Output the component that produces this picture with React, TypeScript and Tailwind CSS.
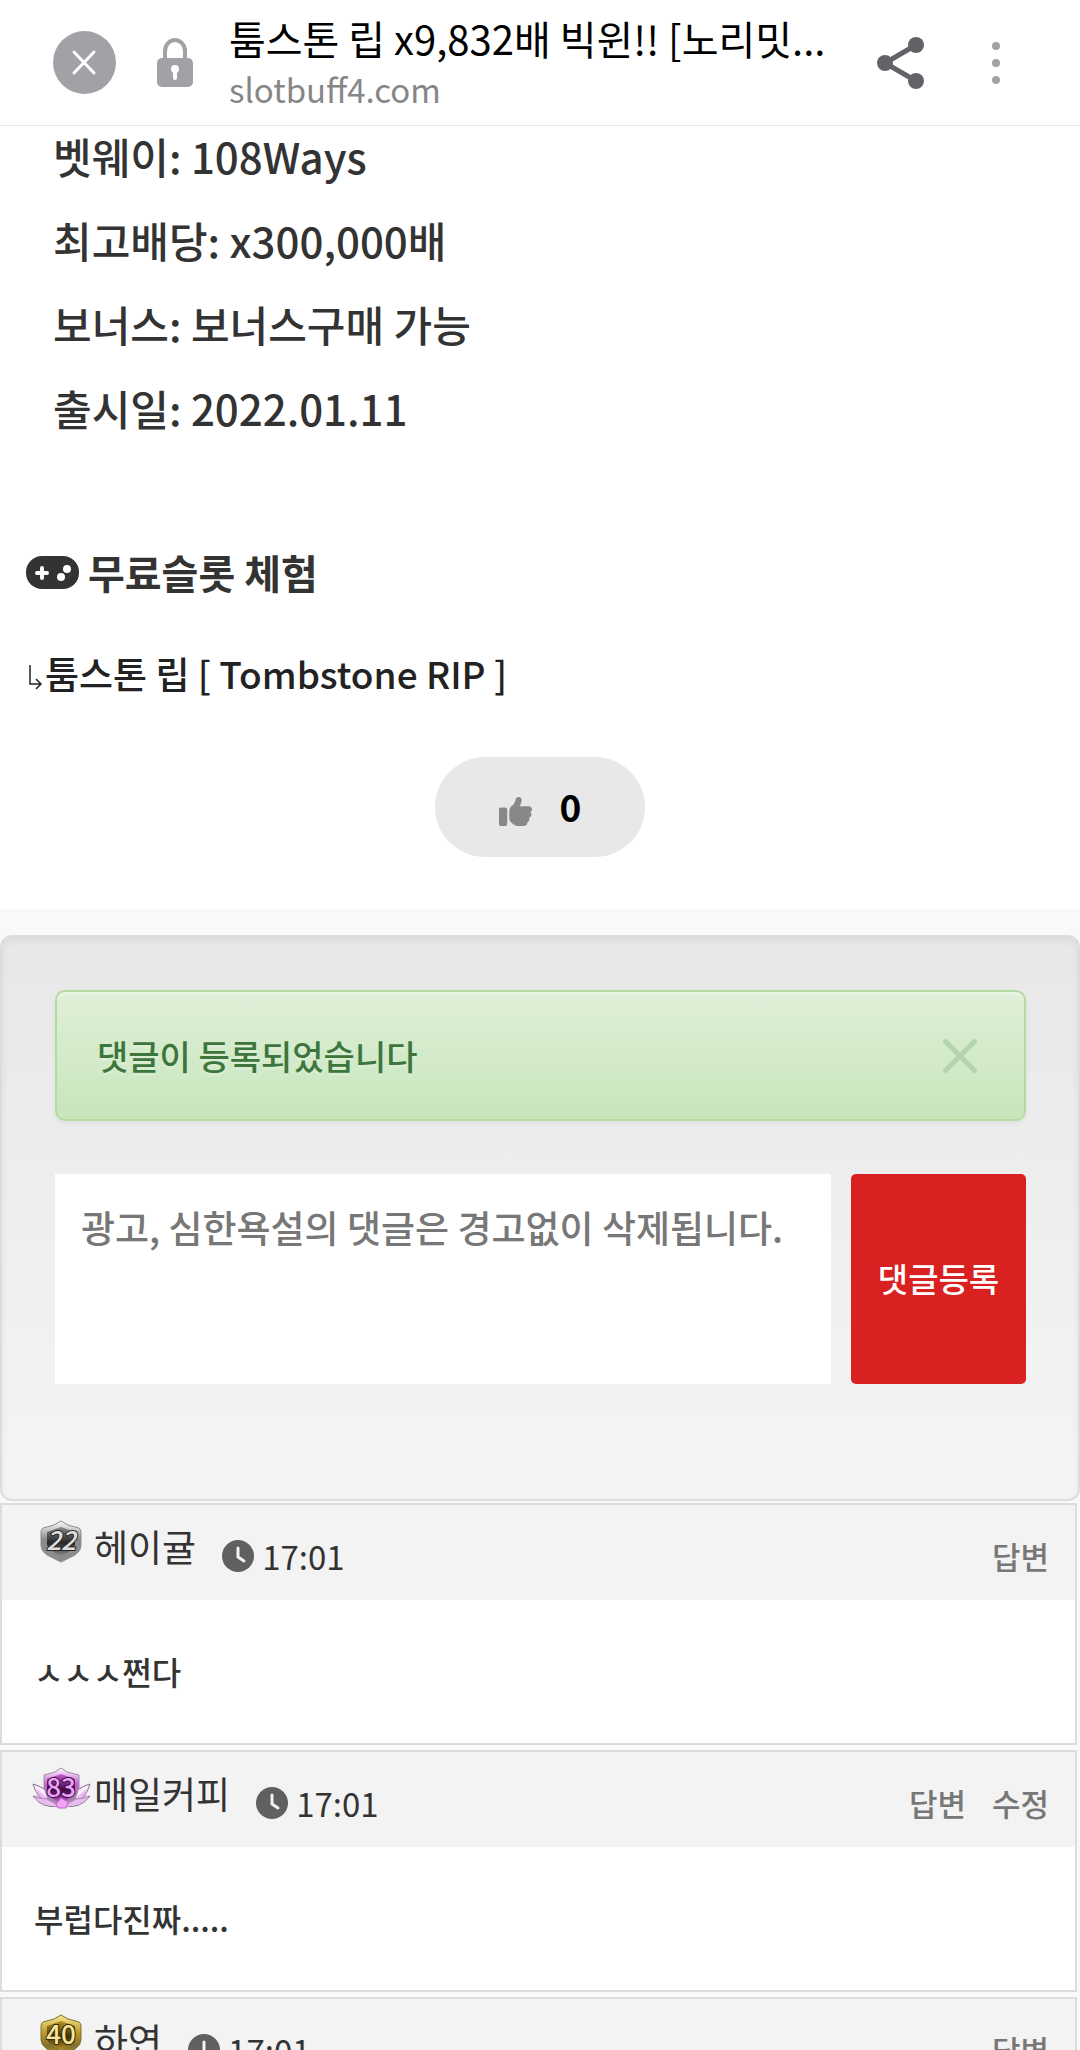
import { useState } from "react";
import { FaThumbsUp } from "react-icons/fa6";

type Tier = "silver" | "violet" | "gold";

type Comment = {
  id: number;
  author: string;
  level: number;
  tier: Tier;
  time: string;
  text: string;
  actions: string[];
};

const specs = [
  ["벳웨이", "108Ways"],
  ["최고배당", "x300,000배"],
  ["보너스", "보너스구매 가능"],
  ["출시일", "2022.01.11"]
];

const comments: Comment[] = [
  { id: 1, author: "헤이귤", level: 22, tier: "silver", time: "17:01", text: "ㅅㅅㅅ쩐다", actions: ["답변"] },
  { id: 2, author: "매일커피", level: 83, tier: "violet", time: "17:01", text: "부럽다진짜.....", actions: ["답변", "수정"] },
  { id: 3, author: "하연", level: 40, tier: "gold", time: "17:01", text: "축하드려요", actions: ["답변"] }
];

const tierColors: Record<Tier, { light: string; mid: string; dark: string; edge: string; digit: string }> = {
  silver: { light: "#ffffff", mid: "#8a8a8a", dark: "#262626", edge: "#8d8d8d", digit: "#dedede" },
  violet: { light: "#ffffff", mid: "#c45fd0", dark: "#3c0a45", edge: "#a08ba3", digit: "#eda2f5" },
  gold: { light: "#fbe98a", mid: "#b8962a", dark: "#3a2c05", edge: "#80702f", digit: "#f7e49a" }
};

function LevelBadge({ level, tier }: { level: number; tier: Tier }) {
  const c = tierColors[tier];
  return (
    <svg viewBox="0 0 60 44" className="h-11 w-15 shrink-0" role="img" aria-label={`레벨 ${level}`}>
      <defs>
        <linearGradient id={`rim-${tier}`} x1="0" y1="0" x2="0" y2="1">
          <stop offset="0" stopColor={c.light} />
          <stop offset="0.45" stopColor={c.mid} />
          <stop offset="0.75" stopColor={c.edge} />
          <stop offset="1" stopColor={c.mid} />
        </linearGradient>
        <linearGradient id={`core-${tier}`} x1="0" y1="0" x2="0" y2="1">
          <stop offset="0" stopColor={c.mid} />
          <stop offset="0.55" stopColor={c.dark} />
          <stop offset="1" stopColor={c.mid} />
        </linearGradient>
      </defs>
      {tier === "violet" ? (
        <g fill="#fbeefd" stroke="#8b7290" strokeWidth="1" strokeLinejoin="round">
          <path d="M1 18 Q6 19 14 24 L26 38 Q14 38 8 31 Q3 26 1 18Z" />
          <path d="M1 30 Q8 33 15 33 L27 40 Q10 43 1 30Z" />
          <path d="M58 18 Q53 19 45 24 L33 38 Q45 38 51 31 Q56 26 58 18Z" />
          <path d="M58 30 Q51 33 44 33 L32 40 Q49 43 58 30Z" />
          <path d="M5 23 Q14 32 26 38 L20 40 Q10 39 4 33Z" fill="#d88ae2" stroke="none" opacity="0.5" />
          <path d="M54 23 Q45 32 33 38 L39 40 Q49 39 55 33Z" fill="#d88ae2" stroke="none" opacity="0.5" />
        </g>
      ) : null}
      {tier === "violet" ? (
        <path d="M29 2 L35 6 L47 9 V22 L43 33 L29 39 L16 33 L12 22 V9 L23 6Z" fill="url(#rim-violet)" stroke={c.edge} strokeWidth="1" />
      ) : (
        <path d="M29 2 L36 6 L47 9 Q49 10 49 13 V27 Q49 32 43 36 L29 43 L15 36 Q9 32 9 27 V13 Q9 10 11 9 L22 6Z" fill={`url(#rim-${tier})`} stroke={c.edge} strokeWidth="1" />
      )}
      <path d="M29 8 L43 13 V26 Q42 31 29 37 Q16 31 15 26 V13Z" fill={`url(#core-${tier})`} />
      <text
        x="29"
        y="31"
        textAnchor="middle"
        className="text-[26px] font-medium"
        fill={c.digit}
        stroke={c.dark}
        strokeWidth="2"
        paintOrder="stroke"
        fontStyle={tier === "silver" ? "italic" : "normal"}
      >
        {level}
      </text>
      {tier === "violet" ? <path d="M24 38 L29 32 L36 36 L34 42 H26Z" fill="#f0a6f5" stroke="#c45fd0" strokeWidth="1" /> : null}
    </svg>
  );
}

function ClockIcon() {
  return (
    <svg viewBox="0 0 32 32" className="size-8 shrink-0" aria-hidden="true">
      <circle cx="16" cy="16" r="16" fill="#606060" />
      <path d="M16 8 V17 L22 21" fill="none" stroke="#f3f3f3" strokeWidth="3" strokeLinecap="round" strokeLinejoin="round" />
    </svg>
  );
}

function BrowserBar() {
  return (
    <header className="flex h-[126px] shrink-0 items-center border-b border-[#e6e6e6] bg-white pr-[65px] pl-[53px]">
      <button type="button" aria-label="닫기" className="shrink-0">
        <svg viewBox="0 0 63 63" className="size-[63px]">
          <circle cx="31.5" cy="31.5" r="31.5" fill="#a2a1a6" />
          <path d="M21 21 L41 42 M41 21 L21 42" stroke="#fff" strokeWidth="3" strokeLinecap="round" />
        </svg>
      </button>
      <svg viewBox="0 0 36 50" className="ml-[41px] h-[50px] w-9 shrink-0" aria-hidden="true">
        <path d="M8 24 V13 a10 11 0 0 1 20 0 V24" fill="none" stroke="#a2a1a6" strokeWidth="4" />
        <rect x="0" y="20" width="36" height="29" rx="5" fill="#a2a1a6" />
        <circle cx="18" cy="31" r="4" fill="#fff" />
        <path d="M18 32 V40" stroke="#fff" strokeWidth="4" strokeLinecap="round" />
      </svg>
      <div className="ml-9 min-w-0 flex-1">
        <p className="text-[40px] leading-[52px] whitespace-nowrap text-black">툼스톤 립 x9,832배 빅윈!! [노리밋...</p>
        <p className="text-[33px] leading-[50px] text-[#868686]">slotbuff4.com</p>
      </div>
      <button type="button" aria-label="공유" className="shrink-0">
        <svg viewBox="0 0 48 54" className="h-[54px] w-12">
          <path d="M39 9 L8 27 L39 45" fill="none" stroke="#636267" strokeWidth="5" />
          <circle cx="39" cy="9" r="8" fill="#636267" />
          <circle cx="8" cy="27" r="8" fill="#636267" />
          <circle cx="39" cy="45" r="8" fill="#636267" />
        </svg>
      </button>
      <button type="button" aria-label="더보기" className="ml-[52px] shrink-0">
        <svg viewBox="0 0 38 44" className="h-11 w-[38px]" fill="#a2a1a6">
          <circle cx="19" cy="5" r="4" />
          <circle cx="19" cy="22" r="4" />
          <circle cx="19" cy="39" r="4" />
        </svg>
      </button>
    </header>
  );
}

function CommentItem({ comment }: { comment: Comment }) {
  return (
    <li className="border-2 border-[#dcdcdc] bg-white">
      <div className="flex h-[95px] items-start bg-[#f3f3f3] pr-[26px] pl-[30px]">
        <div className="mt-[14px]">
          <LevelBadge level={comment.level} tier={comment.tier} />
        </div>
        <span className="ml-0.5 pt-[14px] text-[37px] leading-[54px] text-[#333]">{comment.author}</span>
        <span className="ml-[26px] flex items-center gap-2 pt-6 text-[33px] leading-[54px] text-[#333]">
          <ClockIcon />
          <time>{comment.time}</time>
        </span>
        <div className="ml-auto flex gap-[26px] pt-6 text-[31px] leading-[54px] font-medium text-[#777]">
          {comment.actions.map((action) => (
            <button key={action} type="button">{action}</button>
          ))}
        </div>
      </div>
      <p className="px-8 py-[47px] text-[32px] leading-[49px] font-medium text-[#333]">{comment.text}</p>
    </li>
  );
}

export default function App() {
  const [likes, setLikes] = useState(0);
  const [notice, setNotice] = useState(true);

  return (
    <div className="flex h-screen flex-col overflow-hidden bg-[#f9f9f9] font-['Noto_Sans_CJK_KR',sans-serif]">
      <BrowserBar />
      <main className="min-h-0 flex-1 overflow-hidden">
        <article className="bg-white pb-[52px]">
          <div className="flex flex-col gap-6 px-[53px] text-[42px] leading-[60px] font-medium text-[#333]">
            {specs.map(([label, value]) => (
              <p key={label}>{label}: {value}</p>
            ))}
          </div>

          <h2 className="mt-[101px] flex items-center gap-[9px] px-[26px] text-[40px] leading-[66px] font-bold text-[#333]">
            <svg viewBox="0 0 53 33" className="h-[33px] w-[53px]" aria-hidden="true">
              <rect width="53" height="33" rx="16" fill="#333" />
              <path d="M16 12 V22 M11 17 H21" stroke="#fff" strokeWidth="4" strokeLinecap="round" />
              <circle cx="41" cy="13" r="4" fill="#fff" />
              <circle cx="35" cy="21" r="4" fill="#fff" />
            </svg>
            무료슬롯 체험
          </h2>

          <a href="#tombstone-rip" className="mt-[35px] flex items-center gap-[3px] px-7 text-[37px] leading-[66px] font-medium text-[#222]">
            <svg viewBox="0 0 14 26" className="mt-2 h-[26px] w-[14px]" fill="none" stroke="#222" strokeWidth="1.5" aria-hidden="true">
              <path d="M2 1 V20 H12 M8 15 L13 20 L8 25" />
            </svg>
            툼스톤 립 [ Tombstone RIP ]
          </a>

          <div className="mt-[51px] flex justify-center">
            <button type="button" onClick={() => setLikes(likes + 1)} className="flex h-[100px] w-[210px] items-center justify-center gap-7 rounded-full bg-[#e8e8e8] text-[37px] font-bold text-black">
              <FaThumbsUp className="mt-2 size-[33px] text-[#888]" />
              {likes}
            </button>
          </div>
        </article>

        <section className="mt-[26px] rounded-xl border-2 border-[#dcdcdc] bg-linear-to-b from-[#e8e8e8] to-[#f5f5f5] pt-[53px] pr-[52px] pb-[115px] pl-[53px] shadow-[inset_0_3px_8px_rgba(0,0,0,0.06)]">
          {notice ? (
            <div role="alert" className="mb-[53px] flex h-[131px] items-center justify-between rounded-[10px] border-2 border-[#b2dba1] bg-linear-to-b from-[#dff0d8] to-[#c8e5bc] pr-[45px] pl-10 shadow-[inset_0_3px_0_rgba(255,255,255,0.25),0_3px_5px_rgba(0,0,0,0.05)]">
              <p className="text-[34px] font-medium text-[#3c763d] text-shadow-[0_3px_0_rgba(255,255,255,0.2)]">댓글이 등록되었습니다</p>
              <button type="button" aria-label="알림 닫기" onClick={() => setNotice(false)}>
                <svg viewBox="0 0 38 38" className="size-[38px]">
                  <path d="M3 3 L35 35 M35 3 L3 35" stroke="#b5d3ae" strokeWidth="5" />
                </svg>
              </button>
            </div>
          ) : null}
          <form className="flex h-[210px] gap-5" onSubmit={(e) => e.preventDefault()}>
            <textarea
              aria-label="댓글"
              placeholder="광고, 심한욕설의 댓글은 경고없이 삭제됩니다."
              className="min-w-0 flex-1 resize-none overflow-hidden bg-white px-[26px] py-[26px] text-[37px] leading-[54px] font-medium text-[#333] placeholder:text-[#777]"
            />
            <button type="submit" className="w-[175px] shrink-0 rounded-[5px] bg-[#da2121] text-[33px] font-medium text-white">댓글등록</button>
          </form>
        </section>

        <ul className="mt-0.5 mr-[3px] flex flex-col gap-[5px]">
          {comments.map((comment) => (
            <CommentItem key={comment.id} comment={comment} />
          ))}
        </ul>
      </main>
    </div>
  );
}
